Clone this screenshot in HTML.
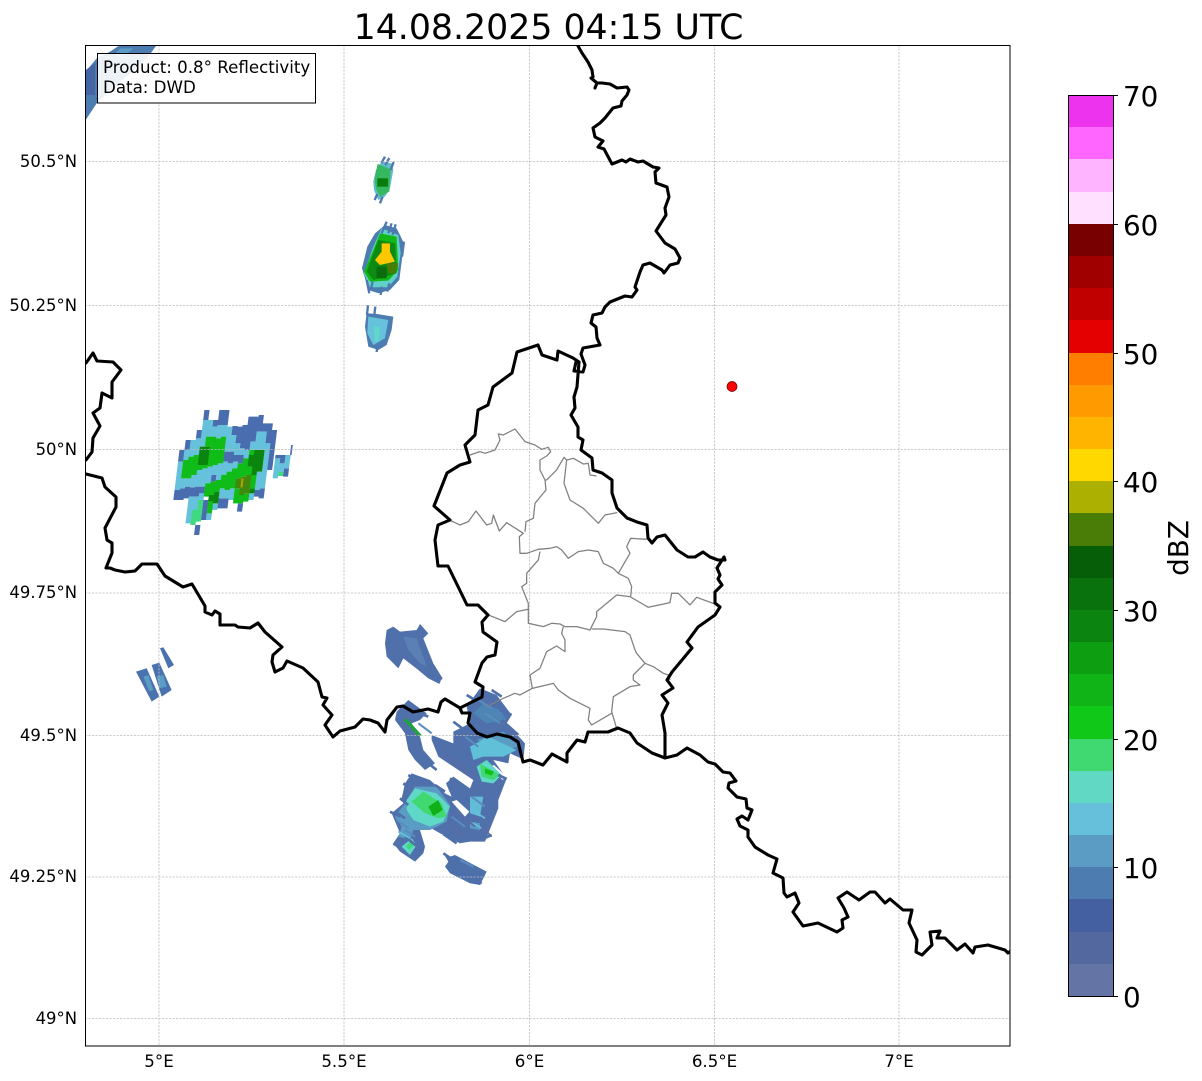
<!DOCTYPE html>
<html><head><meta charset="utf-8"><style>
html,body{margin:0;padding:0;background:#fff}
body{width:1202px;height:1081px;overflow:hidden}
svg{display:block}
text{font-family:"DejaVu Sans","Liberation Sans",sans-serif;fill:#000}
.t{font-size:16.67px}
.y{font-size:16.45px}
.c{font-size:27.78px}
</style></head><body>
<svg width="1202" height="1081" viewBox="0 0 1202 1081" xmlns="http://www.w3.org/2000/svg">
<defs><clipPath id="ax"><rect x="85" y="45" width="925" height="1001"/></clipPath></defs>
<text x="548.500" y="39" font-size="34.72" text-anchor="middle">14.08.2025 04:15 UTC</text>
<g clip-path="url(#ax)">
<!-- top-left + north storms -->
<g transform="translate(80,40) scale(.3333)">
<polygon points="17,95 50,55 90,35 120,15 230,15 205,50 50,190 17,240" fill="#4d7db0"/>
<polygon points="120,25 160,25 130,50 100,50" fill="#5a9cc4"/>
<polygon points="17,90 45,70 45,165 17,165" fill="#4565a5"/>
<!-- N1 -->
<polygon points="905,365 935,370 940,390 930,445 915,470 895,480 882,450 880,425 888,390" fill="#5fbcc8"/>
<polygon points="893,372 932,388 928,455 900,470 888,445 884,415" fill="#35b860"/>
<rect x="892" y="415" width="32" height="25" fill="#0a7c0e"/>
<path d="M915,350 905,368M928,354 916,375M941,366 932,390M892,462 884,480M908,470 900,490" stroke="#4f78b0" stroke-width="7" fill="none"/>
<!-- N2 -->
<polygon points="915,555 950,565 960,585 972,610 958,720 930,750 895,760 865,750 858,725 846,685 862,620 885,580" fill="#4d7db0"/>
<polygon points="905,565 955,585 962,640 952,710 925,742 870,742 852,700 880,620" fill="#60d0c8"/>
<polygon points="900,580 950,590 955,690 925,722 870,725 852,695 880,630" fill="#10b818"/>
<polygon points="895,600 945,610 950,700 880,720 860,695" fill="#0d8a12"/>
<polygon points="920,670 955,670 945,700 925,700" fill="#4a7c08"/>
<polygon points="905,610 930,610 930,635 945,665 900,675 885,660 905,635" fill="#fdc800"/>
<rect x="890" y="680" width="30" height="35" fill="#0a6c0c"/>
<path d="M920,545 905,580M935,550 925,580M947,553 938,585M860,720 868,760M878,725 872,752M905,740 902,765M928,730 922,755M972,605 966,650" stroke="#4f78b0" stroke-width="7" fill="none"/>
<!-- N3 -->
<polygon points="860,820 892,822 940,830 935,870 920,915 895,930 865,920 855,860" fill="#4d7db0"/>
<polygon points="865,830 925,840 915,895 880,915 862,880" fill="#66c2dc"/>
<polygon points="882,860 900,860 895,905 885,905" fill="#60d8c8"/>
<path d="M864,796 861,825M886,800 883,825M892,920 890,936" stroke="#4f78b0" stroke-width="7" fill="none"/>
</g>
<!-- left storm columns -->
<g transform="translate(170,400) scale(.3333) translate(24.6,0) skewX(-7)" fill="none" stroke-width="15.500">
<path stroke="#4a6db0" d="M30 150V185M30 270V300M45 120V150M45 265V300M60 260V295M75 90V115M75 262V290M90 30V60M90 260V290M105 260V280M105 375V405M120 60V80M120 300V360M135 30V75M135 225V245M150 30V75M165 155V185M165 295V325M180 78V105M180 155V190M180 295V325M195 80V130M195 165V185M210 75V145M210 165V190M225 50V150M225 310V335M240 50V125M255 45V95M270 70V95M270 270V290M285 70V130M285 265V295M300 90V210M320 165V175M335 165V190M350 205V230"/>
<path stroke="#66c2dc" d="M30 185V270M45 150V180M45 235V265M60 120V170M60 235V260M75 115V165M75 225V262M75 290V370M90 60V140M90 210V260M90 290V330M105 60V110M105 205V260M105 280V300M120 80V110M120 200V250M135 75V115M135 195V225M135 340V360M150 75V110M150 190V240M150 310V330M165 80V155M165 185V225M165 265V295M180 105V155M180 190V215M180 270V295M195 130V165M195 185V205M195 265V300M210 145V165M225 150V175M240 125V150M255 95V150M255 280V300M270 95V150M270 215V270M285 130V265M320 175V235M335 190V215M350 165V205"/>
<path stroke="#10bc18" d="M45 180V235M60 170V235M75 165V225M90 195V210M105 110V140M105 195V205M120 110V200M120 250V290M135 115V195M135 245V285M135 305V340M150 110V190M150 240V275M165 225V265M180 215V270M195 205V265M210 190V235M210 265V310M225 175V230M225 285V310M240 150V165M240 200V225M240 280V305M255 225V265"/>
<path stroke="#0a860e" d="M90 140V195M105 140V195M135 285V305M150 275V310M240 165V200M255 150V225M255 265V280M270 150V215"/>
<path stroke="#3f8a0c" d="M210 235V265M225 230V285M240 225V280"/>
<path stroke="#40d880" d="M90 330V375M105 300V365M335 215V228"/>
<path stroke="#bfa000" stroke-width="6" d="M222 235V262"/>
<path stroke="#4a6db0" stroke-width="5" d="M358 135V165"/>
</g>
<!-- small storm -->
<g transform="translate(80,340) scale(.3333)">
<polygon points="168,995 200,985 238,1070 215,1085" fill="#4a72ae"/>
<polygon points="215,975 238,968 275,1050 245,1070" fill="#4a72ae"/>
<polygon points="240,925 250,922 282,975 265,985" fill="#4a72ae"/>
<polygon points="190,1010 205,1005 220,1050 208,1055" fill="#5a9cc4"/>
<polygon points="230,1010 250,1005 260,1040 240,1045" fill="#5a9cc4"/>
</g>
<!-- south storms -->
<g transform="translate(370,600) scale(.3333)">
<polygon points="50,90 70,80 90,95 140,90 150,72 175,100 160,115 190,190 218,235 205,250 175,235 145,210 100,175 85,205 50,170 45,130" fill="#4f70aa"/>
<polygon points="100,110 140,115 170,200 150,190 115,150" fill="#5a80b5"/>
<polygon points="80,335 115,300 170,340 150,360 125,370 150,410 160,450 195,490 165,510 135,480 115,450 105,400 75,360" fill="#4f70aa"/>
<polygon points="100,360 110,355 155,405 145,410" fill="#20a040"/>
<polygon points="185,405 250,430 250,395 300,370 290,320 330,265 380,285 425,345 410,370 465,430 460,478 420,460 415,490 370,480 410,535 385,600 385,625 345,725 300,725 270,730 210,700 175,680 150,690 165,740 160,760 135,785 90,755 70,730 90,700 65,640 100,610 95,595 105,550 125,520 180,540 225,580 245,590 228,550 250,530 300,565 310,540 205,470 185,420" fill="#4f70aa"/>
<polygon points="340,310 390,330 410,360 350,370 310,340" fill="#4d85b5"/>
<polygon points="320,420 400,395 450,440 400,450" fill="#5a9cc4"/>
<polygon points="300,440 355,410 440,450 400,470 340,470 310,480" fill="#60c0d8"/>
<polygon points="245,605 260,600 298,635 285,650" fill="#fff"/>
<polygon points="360,500 372,495 410,530 398,540" fill="#fff"/>
<polygon points="320,500 350,480 395,525 370,550 335,545" fill="#60d8c8"/>
<polygon points="330,490 390,525 370,540 335,530" fill="#40d870"/>
<polygon points="345,505 372,515 365,527 345,520" fill="#10c018"/>
<polygon points="300,590 340,590 330,650 300,640" fill="#62bcd8"/>
<polygon points="300,665 330,670 330,690 300,685" fill="#5a9cc4"/>
<polygon points="75,650 105,610 135,560 200,560 240,615 230,665 180,690 130,690 120,720 85,710 95,680" fill="#5a9cc4"/>
<polygon points="110,600 135,565 200,580 240,620 220,665 180,680 130,660 110,630" fill="#60d8c8"/>
<polygon points="125,605 160,575 215,610 230,650 205,655 165,640" fill="#40d870"/>
<polygon points="175,620 205,600 218,630 190,648" fill="#0fb018"/>
<polygon points="95,740 125,715 140,735 120,765" fill="#60d8c8"/>
<polygon points="108,738 124,722 132,735 118,750" fill="#40d880"/>
<polygon points="220,760 240,770 255,765 350,815 330,855 300,850 240,820 225,800 235,785" fill="#4d70aa"/>
</g>
<!-- south streaks, edge serration and inner texture -->
<g transform="translate(385,680) scale(.3333)" fill="none" stroke="#4f70aa" stroke-width="8">
<path d="M55,310 80,330M45,355 70,375M15,395 45,410M25,490 60,515M60,470 110,510M175,520 205,540M240,555 300,580M255,590 290,610M150,175 190,215M130,250 155,270M245,45 270,60M320,30 350,50M345,90 380,105M350,120 400,165M340,285 365,297M195,295 230,320M205,125 245,155M105,100 130,110M150,0 165,8M30,395 60,415M70,285 100,305M150,315 180,335M285,480 320,465M175,462 215,490"/>
<path stroke="#5a8cc0" stroke-width="6" d="M240,170 280,200M260,350 300,380M300,100 345,130M280,60 320,85M60,450 90,470M200,410 240,440M35,420 70,445M225,540 265,560M100,130 140,160"/>
<path stroke="#66c2dc" stroke-width="5" d="M265,430 290,445M270,395 300,415M40,455 75,475"/>
<path stroke="#5b6ca5" stroke-width="6" d="M170,220 220,255M210,250 270,290M215,395 270,440M190,430 240,470M290,440 320,470"/>
</g>
<!-- gridlines -->
<g stroke="#bdbdbd" stroke-width=".8" stroke-dasharray="2.2 1.3" fill="none">
<path d="M159 45V1046M344 45V1046M529.500 45V1046M714.500 45V1046M899 45V1046"/>
<path d="M85 161.500H1010M85 305.500H1010M85 449.500H1010M85 593H1010M85 735.500H1010M85 877H1010M85 1018.500H1010"/>
</g>
<!-- cantons -->
<g fill="none" stroke="#808080" stroke-width="3.8" stroke-linejoin="round" transform="translate(420,330) scale(.3333)">
<path d="M150,375 180,365 195,370 225,360 240,330 235,312 250,315 285,297 315,335 345,345 365,358 385,352 392,365 380,378 360,390 360,420 375,450 380,450 410,420 432,382 440,390 460,385 490,402 505,400 510,435 530,438"/>
<path d="M375,450 378,480 345,520 340,565 318,575 315,605"/>
<path d="M92,572 120,585 145,575 168,543 200,585 215,580 220,555 238,603 260,578 310,610 298,620 300,670 320,670 355,658 390,655 410,650 425,660 445,685 475,665 505,660 535,665 550,700 580,715 595,730 625,745 635,770 632,800"/>
<path d="M440,390 432,460 450,510 490,535 535,580 555,555 592,548"/>
<path d="M595,730 630,670 620,650 632,625 680,628"/>
<path d="M360,665 355,690 320,730 320,760 305,770 325,820 325,880 370,890 395,880 420,882 435,890 470,890 510,900 530,860 530,845 590,795 630,800 685,832 750,818 755,790 775,790 810,825 830,802 885,822"/>
<path d="M205,855 255,875 290,845 325,838"/>
<path d="M515,897 550,897 615,905 630,915 645,960"/>
</g>
<g fill="none" stroke="#808080" stroke-width="3.8" stroke-linejoin="round" transform="translate(370,600) scale(.3333)">
<path d="M795,150 800,160 825,190 790,225 790,240 810,255 780,260 730,290 725,335 740,385"/>
<path d="M825,190 850,200 880,220 895,225 900,240"/>
<path d="M580,80 575,100 585,120 585,155 560,138 530,155 510,205 480,225 487,265 450,285 435,280 400,295 350,320"/>
<path d="M487,265 550,250 565,270 600,295 630,310 660,325 655,360 665,375 725,340"/>
</g>
<!-- borders -->
<g fill="none" stroke="#000" stroke-width="3.100" stroke-linejoin="round" stroke-linecap="round">
<path d="M578,46 582,53 588,62 592,70 593,77 591,78 597,83 595,88 597,83 602,83 610,84 617,88 627,87 629,90 627,95 622,101 621,106 613,108 605,118 600,123 593,128 595,137 603,141 598,147 604,149 612,164 622,160 626,162 630,159 638,162 643,161 653,167 659,168 655,172 656,183 667,187 669,197 665,208 666,215 656,231 665,243 675,249 680,258 678,263 670,265 664,273 662,270 650,263 643,265 640,272 635,287 637,290 632,297 625,296 610,302 605,307 602,313 593,315 591,323 596,327 597,338 600,345 583,348 581,354 585,365 583,372 574,371 576,362 579,362 577,387 574,397 575,408 571,415 578,427 578,437 583,440 581,450 592,458 593,470 602,473 612,480 612,493 617,508 627,518 637,522 647,525 648,538 652,543 657,537 665,535 677,550 688,557 695,557 703,552 710,557 718,560 725,560 724,557 717,568 720,575 718,579 722,585 715,592 715,603 720,607 715,615 698,627 687,642 692,648 682,660 672,672 667,680 673,688 662,695 668,703 662,715 665,733 665,757"/>
<path d="M86,474 102,478 105,487 116,497 116,507 105,528 107,540 112,543 112,553 106,568 110,568 115,570 125,572 135,571 142,564 157,564 165,576 183,587 192,584 205,606 205,612 212,615 215,611 220,614 220,625 235,625 238,627 250,628 258,623 265,632 282,647 273,655 272,662 275,672 283,668 287,661 303,668 318,682 322,697 327,698 323,705 332,715 325,725 333,737 340,731 355,727 363,719 370,720 378,723 385,732 387,720 397,707 403,706 413,712 428,709 438,712 441,702 445,699 460,708 470,703 482,697 483,687 475,682 482,663 487,657 495,655 497,642 483,632 482,622 488,615 478,605 467,605 448,566 438,566 435,540 438,525 450,520 434,506 447,473 460,465 470,462 465,445 475,435 478,410 488,405 493,387 512,373 517,352 538,345 542,355 557,360 558,351 573,358 579,362"/>
<path d="M460,708 462,713 470,713 468,723 477,733 487,737 497,734 510,737 518,742 523,762 530,760 543,765 552,754 567,762 567,753 577,740 585,742 588,732 608,732 618,728 630,733 637,743 652,753 665,758 677,755 687,748 700,755 708,762 715,764 723,772 730,773 736,781 729,783 728,788 737,797 746,799 747,808 752,810 748,820 742,816 737,819 740,826 748,830 748,837 755,847 768,855 777,859 773,873 783,878 784,893 787,897 795,893 799,903 793,912 803,926 818,923 837,932 843,928 842,920 848,917 844,908 838,898 847,892 859,900 870,892 875,892 885,903 890,899 903,910 912,910 909,923 917,940 916,952 922,955 932,945 930,932 940,931 937,938 945,938 957,950 965,944 973,953 975,947 988,945 1005,950 1008,953 1012,950"/>
<path d="M86,363 93,353 97,361 113,362 121,370 112,382 112,398 102,393 100,408 93,413 100,426 93,438 92,452 86,460"/>
</g>
<circle cx="732" cy="386.500" r="5" fill="#f00" stroke="#600" stroke-width=".7"/>
</g>
<rect x="85.500" y="45.500" width="924.500" height="1000.500" fill="none" stroke="#000" stroke-width="1"/>
<!-- info box -->
<rect x="97.500" y="53.500" width="218" height="49.500" fill="#fff" fill-opacity=".9" stroke="#000" stroke-width="1"/>
<text class="t" x="103" y="73">Product: 0.8° Reflectivity</text>
<text class="t" x="103" y="93">Data: DWD</text>
<!-- axis labels -->
<g class="y" text-anchor="end">
<text x="77" y="167">50.5°N</text>
<text x="77" y="311">50.25°N</text>
<text x="77" y="455">50°N</text>
<text x="77" y="598">49.75°N</text>
<text x="77" y="741">49.5°N</text>
<text x="77" y="882">49.25°N</text>
<text x="77" y="1024">49°N</text>
</g>
<g class="t" text-anchor="middle">
<text x="159" y="1067">5°E</text>
<text x="344" y="1067">5.5°E</text>
<text x="529.500" y="1067">6°E</text>
<text x="714.500" y="1067">6.5°E</text>
<text x="899" y="1067">7°E</text>
</g>
<!-- colorbar -->
<g shape-rendering="crispEdges">
<rect x="1068" y="95" width="45" height="33" fill="#ee33ee"/>
<rect x="1068" y="127" width="45" height="33" fill="#ff66ff"/>
<rect x="1068" y="159" width="45" height="33" fill="#ffb4ff"/>
<rect x="1068" y="192" width="45" height="33" fill="#ffe0ff"/>
<rect x="1068" y="224" width="45" height="33" fill="#780000"/>
<rect x="1068" y="256" width="45" height="33" fill="#a00000"/>
<rect x="1068" y="288" width="45" height="33" fill="#c00000"/>
<rect x="1068" y="320" width="45" height="33" fill="#e40000"/>
<rect x="1068" y="353" width="45" height="33" fill="#ff7e00"/>
<rect x="1068" y="385" width="45" height="33" fill="#ff9a00"/>
<rect x="1068" y="417" width="45" height="33" fill="#ffb400"/>
<rect x="1068" y="449" width="45" height="33" fill="#ffd800"/>
<rect x="1068" y="481" width="45" height="33" fill="#acb000"/>
<rect x="1068" y="513" width="45" height="33" fill="#4a7c08"/>
<rect x="1068" y="546" width="45" height="33" fill="#065f08"/>
<rect x="1068" y="578" width="45" height="33" fill="#0a720c"/>
<rect x="1068" y="610" width="45" height="33" fill="#0c8410"/>
<rect x="1068" y="642" width="45" height="33" fill="#0e9e12"/>
<rect x="1068" y="674" width="45" height="33" fill="#10b416"/>
<rect x="1068" y="706" width="45" height="33" fill="#10c818"/>
<rect x="1068" y="739" width="45" height="33" fill="#40d870"/>
<rect x="1068" y="771" width="45" height="33" fill="#60d8c4"/>
<rect x="1068" y="803" width="45" height="33" fill="#66c0dc"/>
<rect x="1068" y="835" width="45" height="33" fill="#5a9cc4"/>
<rect x="1068" y="867" width="45" height="33" fill="#4d7db0"/>
<rect x="1068" y="899" width="45" height="33" fill="#4560a0"/>
<rect x="1068" y="932" width="45" height="33" fill="#5468a0"/>
<rect x="1068" y="964" width="45" height="32" fill="#6475a5"/>
<rect x="1068.500" y="95.500" width="45" height="901" fill="none" stroke="#000" stroke-width="1"/>
<path d="M1113 95.500h5M1113 224.500h5M1113 353.500h5M1113 481.500h5M1113 610.500h5M1113 739.500h5M1113 867.500h5M1113 996.500h5" stroke="#000" stroke-width="1" fill="none"/>
</g>
<g class="c">
<text x="1123" y="106">70</text>
<text x="1123" y="235">60</text>
<text x="1123" y="364">50</text>
<text x="1123" y="492">40</text>
<text x="1123" y="621">30</text>
<text x="1123" y="750">20</text>
<text x="1123" y="878">10</text>
<text x="1123" y="1007">0</text>
</g>
<text class="c" transform="translate(1188,548) rotate(-90)" text-anchor="middle">dBZ</text>
</svg>
</body></html>
